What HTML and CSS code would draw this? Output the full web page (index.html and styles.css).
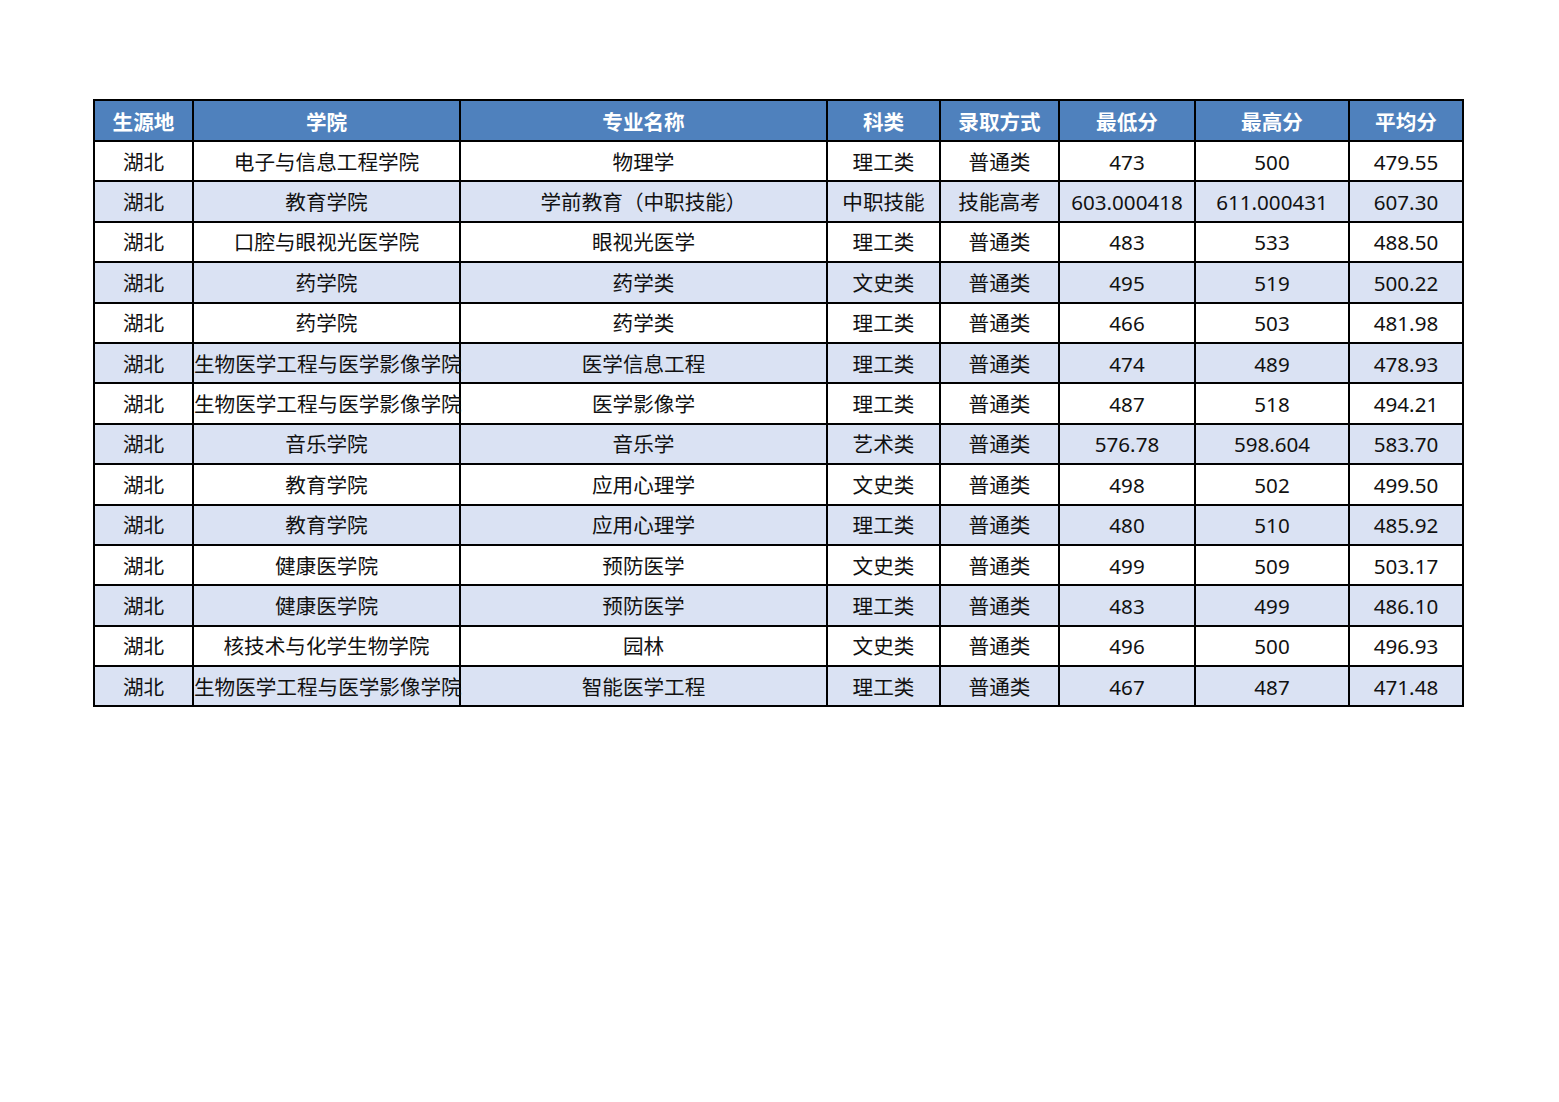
FILE: index.html
```html
<!DOCTYPE html>
<html lang="zh">
<head>
<meta charset="utf-8">
<link rel="stylesheet" href="styles.css">
</head>
<body>
<div class="page">
<table class="score-table">
<colgroup>
<col class="c1"><col class="c2"><col class="c3"><col class="c4"><col class="c5"><col class="c6"><col class="c7"><col class="c8">
</colgroup>
<thead>
<tr><th>生源地</th><th>学院</th><th>专业名称</th><th>科类</th><th>录取方式</th><th>最低分</th><th>最高分</th><th>平均分</th></tr>
</thead>
<tbody>
<tr><td>湖北</td><td>电子与信息工程学院</td><td>物理学</td><td>理工类</td><td>普通类</td><td>473</td><td>500</td><td>479.55</td></tr>
<tr class="alt"><td>湖北</td><td>教育学院</td><td>学前教育（中职技能）</td><td>中职技能</td><td>技能高考</td><td>603.000418</td><td>611.000431</td><td>607.30</td></tr>
<tr><td>湖北</td><td>口腔与眼视光医学院</td><td>眼视光医学</td><td>理工类</td><td>普通类</td><td>483</td><td>533</td><td>488.50</td></tr>
<tr class="alt"><td>湖北</td><td>药学院</td><td>药学类</td><td>文史类</td><td>普通类</td><td>495</td><td>519</td><td>500.22</td></tr>
<tr><td>湖北</td><td>药学院</td><td>药学类</td><td>理工类</td><td>普通类</td><td>466</td><td>503</td><td>481.98</td></tr>
<tr class="alt"><td>湖北</td><td>生物医学工程与医学影像学院</td><td>医学信息工程</td><td>理工类</td><td>普通类</td><td>474</td><td>489</td><td>478.93</td></tr>
<tr><td>湖北</td><td>生物医学工程与医学影像学院</td><td>医学影像学</td><td>理工类</td><td>普通类</td><td>487</td><td>518</td><td>494.21</td></tr>
<tr class="alt"><td>湖北</td><td>音乐学院</td><td>音乐学</td><td>艺术类</td><td>普通类</td><td>576.78</td><td>598.604</td><td>583.70</td></tr>
<tr><td>湖北</td><td>教育学院</td><td>应用心理学</td><td>文史类</td><td>普通类</td><td>498</td><td>502</td><td>499.50</td></tr>
<tr class="alt"><td>湖北</td><td>教育学院</td><td>应用心理学</td><td>理工类</td><td>普通类</td><td>480</td><td>510</td><td>485.92</td></tr>
<tr><td>湖北</td><td>健康医学院</td><td>预防医学</td><td>文史类</td><td>普通类</td><td>499</td><td>509</td><td>503.17</td></tr>
<tr class="alt"><td>湖北</td><td>健康医学院</td><td>预防医学</td><td>理工类</td><td>普通类</td><td>483</td><td>499</td><td>486.10</td></tr>
<tr><td>湖北</td><td>核技术与化学生物学院</td><td>园林</td><td>文史类</td><td>普通类</td><td>496</td><td>500</td><td>496.93</td></tr>
<tr class="alt"><td>湖北</td><td>生物医学工程与医学影像学院</td><td>智能医学工程</td><td>理工类</td><td>普通类</td><td>467</td><td>487</td><td>471.48</td></tr>
</tbody>
</table>
</div>
</body>
</html>
```
FILE: styles.css
```css
html, body {
  margin: 0;
  padding: 0;
  background: #ffffff;
}
.page {
  padding: 99px 0 0 93px;
}
.score-table {
  border-collapse: collapse;
  table-layout: fixed;
  width: 1369px;
  font-family: "Noto Sans", "Noto Sans CJK SC", sans-serif;
  font-size: 20.6px;
  color: #111111;
}
.c1 { width: 99px; }
.c2 { width: 267px; }
.c3 { width: 367px; }
.c4 { width: 113px; }
.c5 { width: 119px; }
.c6 { width: 136px; }
.c7 { width: 154px; }
.c8 { width: 114px; }
.score-table th,
.score-table td {
  border: 2px solid #000000;
  padding: 0;
  text-align: center;
  vertical-align: middle;
  white-space: nowrap;
  overflow: visible;
  line-height: 24px;
}
.score-table th {
  background: #4f81bd;
  color: #ffffff;
  font-weight: bold;
  height: 37px;
  padding-top: 2px;
}
.score-table td {
  height: 37.4px;
  background: #ffffff;
  padding-top: 1px;
}
.score-table tr.alt td {
  background: #dae2f3;
}
```
